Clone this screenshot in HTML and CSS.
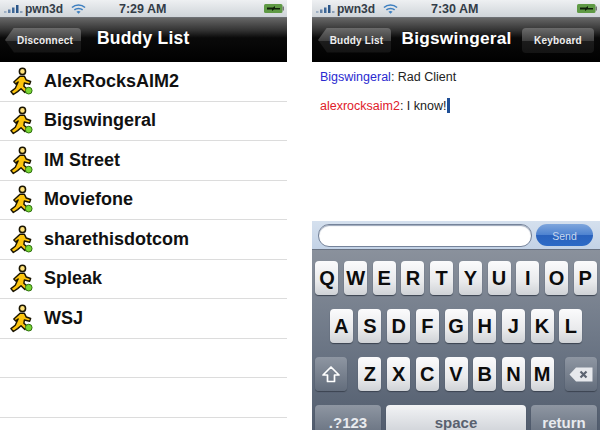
FILE: index.html
```html
<html>
<head>
   <link rel="stylesheet" href="styles.css">
</head>
<body>
   <svg class="defs" width="0" height="0">
      <symbol id="aim" viewBox="0 0 26 30">
         <circle cx="14" cy="4.5" r="3.2" fill="#ffe27a" stroke="#1a1400" stroke-width="1.6"/>
         <path d="M11.5 9.5 L16 9.5 L18 13.5 L22.5 15 L21.5 17.8 L16 16.5 L15.5 20 L20 24 L16.5 26.5 L12.5 22.5 L9 25.5 L4.5 28.5 L2 25.5 L6.5 22 L9.5 15.5 L7 17.5 L5 15.5 Z" fill="#fcc40e" stroke="#1a1400" stroke-width="1.5" stroke-linejoin="round"/>
         <circle cx="20.5" cy="24.5" r="3.5" fill="#7ad633" stroke="#2c6a10" stroke-width="1"/>
      </symbol>
      <symbol id="bars" viewBox="0 0 20 10">
         <rect x="0" y="7" width="2.5" height="2" fill="#9fb0c4"/>
         <rect x="4" y="5.5" width="2.5" height="3.5" fill="#5f7fa6"/>
         <rect x="8" y="3.5" width="2.5" height="5.5" fill="#3d6797"/>
         <rect x="12" y="1" width="2.5" height="8" fill="#2a5689"/>
         <rect x="16" y="7" width="2.5" height="2" fill="#8ba0b8"/>
      </symbol>
      <symbol id="wifi" viewBox="0 0 16 12">
         <g fill="none" stroke="#3d7fc0" stroke-width="1.7">
            <path d="M1 4.4 C5 .8 11 .8 15 4.4"/>
            <path d="M3.6 7 C6 5 10 5 12.4 7"/>
         </g>
         <path d="M8 11 L5.8 8.8 C7 7.9 9 7.9 10.2 8.8 Z" fill="#3d7fc0"/>
      </symbol>
      <symbol id="battery" viewBox="0 0 20 9">
         <rect x="0" y="0" width="18.5" height="9" rx="1.5" fill="#5f9a45"/>
         <rect x="18.5" y="2.5" width="1.5" height="4" fill="#777"/>
         <path d="M3 3.5 H9 L11 2 V4 H16 V5.5 H10 L8 7 V5.5 H3 Z" fill="#10200a"/>
      </symbol>
   </svg>

   <div class="phone phone-left">
      <div class="status-bar">
         <svg class="bars"><use href="#bars"/></svg>
         <span class="carrier">pwn3d</span>
         <svg class="wifi"><use href="#wifi"/></svg>
         <span class="clock">7:29 AM</span>
         <svg class="battery"><use href="#battery"/></svg>
      </div>
      <div class="nav-bar">
         <div class="btn btn-back">Disconnect</div>
         <div class="nav-title">Buddy List</div>
      </div>
      <div class="buddy-list">
         <div class="buddy"><svg class="aim"><use href="#aim"/></svg>AlexRocksAIM2</div>
         <div class="buddy"><svg class="aim"><use href="#aim"/></svg>Bigswingeral</div>
         <div class="buddy"><svg class="aim"><use href="#aim"/></svg>IM Street</div>
         <div class="buddy"><svg class="aim"><use href="#aim"/></svg>Moviefone</div>
         <div class="buddy"><svg class="aim"><use href="#aim"/></svg>sharethisdotcom</div>
         <div class="buddy"><svg class="aim"><use href="#aim"/></svg>Spleak</div>
         <div class="buddy"><svg class="aim"><use href="#aim"/></svg>WSJ</div>
         <div class="buddy"></div>
         <div class="buddy"></div>
      </div>
   </div>

   <div class="phone phone-right">
      <div class="status-bar">
         <svg class="bars"><use href="#bars"/></svg>
         <span class="carrier">pwn3d</span>
         <svg class="wifi"><use href="#wifi"/></svg>
         <span class="clock">7:30 AM</span>
         <svg class="battery"><use href="#battery"/></svg>
      </div>
      <div class="nav-bar nav-chat">
         <div class="btn btn-back btn-buddy">Buddy List</div>
         <div class="nav-title">Bigswingeral</div>
         <div class="btn btn-keyboard">Keyboard</div>
      </div>
      <div class="chat">
         <p><span class="them">Bigswingeral</span>: Rad Client</p>
         <p><span class="me">alexrocksaim2</span>: I know!<span class="caret"></span></p>
      </div>
      <div class="input-bar">
         <div class="input-box"></div>
         <div class="send">Send</div>
      </div>
      <div class="keyboard">
         <div class="key-row">
            <div class="key">Q</div><div class="key">W</div><div class="key">E</div><div class="key">R</div><div class="key">T</div>
            <div class="key">Y</div><div class="key">U</div><div class="key">I</div><div class="key">O</div><div class="key">P</div>
         </div>
         <div class="key-row">
            <div class="key">A</div><div class="key">S</div><div class="key">D</div><div class="key">F</div><div class="key">G</div>
            <div class="key">H</div><div class="key">J</div><div class="key">K</div><div class="key">L</div>
         </div>
         <div class="key-row row-three">
            <div class="key key-dark key-side">
               <svg width="18" height="17" viewBox="0 0 18 17"><path d="M9 1 L17 9 H12.5 V15.5 H5.5 V9 H1 Z" fill="none" stroke="#fff" stroke-width="1.7" stroke-linejoin="round"/></svg>
            </div>
            <div class="letters">
               <div class="key">Z</div><div class="key">X</div><div class="key">C</div><div class="key">V</div>
               <div class="key">B</div><div class="key">N</div><div class="key">M</div>
            </div>
            <div class="key key-dark key-side">
               <svg width="24" height="15" viewBox="0 0 24 15"><path d="M7 0.5 H23.5 V14.5 H7 L0.5 7.5 Z" fill="#e6e8ec"/><path d="M11.5 4.5 L17.5 10.5 M17.5 4.5 L11.5 10.5" stroke="#5c6472" stroke-width="2.2"/></svg>
            </div>
         </div>
         <div class="key-row row-four">
            <div class="key key-dark key-num">.?123</div>
            <div class="key key-space">space</div>
            <div class="key key-dark key-return">return</div>
         </div>
      </div>
   </div>
</body>
</html>
```

FILE: styles.css
```css
html, body {
   margin: 0;
   padding: 0;
   background-color: #fff;
}
body {
   display: flex;
   width: 600px;
   height: 430px;
   overflow: hidden;
   font-family: "Liberation Sans", Arial, sans-serif;
}
.defs {
   position: absolute;
}
.phone {
   display: flex;
   flex-direction: column;
   height: 430px;
   overflow: hidden;
}
.phone-left {
   width: 287px;
   margin-right: 25px;
}
.phone-right {
   width: 288px;
}

/* status bar */
.status-bar {
   display: flex;
   flex: none;
   align-items: center;
   height: 18px;
   padding-left: 4px;
   background: linear-gradient(#eef0f2, #cfd4d9);
   color: #333c47;
   font-size: 11px;
   font-weight: bold;
   box-sizing: border-box;
   border-bottom: 1px solid #6d7074;
}
.bars {
   width: 20px;
   height: 10px;
}
.carrier {
   margin-left: 1px;
   width: 46px;
   font-size: 12px;
}
.wifi {
   width: 15px;
   height: 12px;
}
.clock {
   margin-left: 33px;
   font-size: 12.5px;
   flex: 1;
}
.battery {
   width: 20px;
   height: 9px;
   margin-right: 3px;
}

/* nav bar */
.nav-bar {
   display: flex;
   flex: none;
   align-items: center;
   height: 44px;
   padding-left: 5px;
   background: linear-gradient(#666 0, #333 28%, #0a0a0a 45%, #000 100%);
   color: #fff;
   box-sizing: border-box;
}
.nav-title {
   margin-left: 16px;
   margin-top: -4px;
   font-size: 17.5px;
   font-weight: bold;
   letter-spacing: .2px;
   text-shadow: 0 -1px 0 #222;
}
.btn {
   display: flex;
   align-items: center;
   justify-content: center;
   height: 25px;
   background: linear-gradient(#6b6b6b, #3f3f3f 50%, #1c1c1c 52%, #141414);
   border-radius: 4px;
   font-size: 10px;
   font-weight: bold;
   letter-spacing: .2px;
   color: #eee;
}
.btn-back {
   width: 72px;
   padding-left: 4px;
   clip-path: polygon(9px 0, 100% 0, 100% 100%, 9px 100%, 0 50%);
}
.nav-chat {
   padding-left: 6px;
   padding-right: 6px;
   justify-content: space-between;
}
.nav-chat .nav-title {
   margin-left: 0;
   font-size: 17.3px;
}
.nav-chat .btn-buddy {
   width: 69px;
}
.btn-keyboard {
   width: 72px;
   font-size: 10px;
}

/* buddy list */
.buddy-list {
   flex: 1;
}
.buddy {
   display: flex;
   align-items: center;
   height: 39.5px;
   box-sizing: border-box;
   border-bottom: 1px solid #dcdcdc;
   color: #111;
   font-size: 18px;
   font-weight: bold;
}
.aim {
   width: 25px;
   height: 29px;
   margin-left: 9px;
   margin-right: 10px;
}

/* chat */
.chat {
   flex: none;
   height: 159px;
   padding: 8px 0 0 8px;
   box-sizing: border-box;
   font-size: 12.5px;
   color: #222;
}
.chat p {
   margin: 0 0 13px 0;
   line-height: 15px;
}
.them {
   color: #2a2ad0;
}
.me {
   color: #e0202a;
}
.caret {
   display: inline-block;
   width: 3px;
   height: 15px;
   margin-left: 1px;
   vertical-align: -3px;
   background-color: #1f4f96;
}

/* text input */
.input-bar {
   display: flex;
   flex: none;
   align-items: center;
   height: 29px;
   padding: 0 7px 0 6px;
   gap: 4px;
   box-sizing: border-box;
   background: linear-gradient(#d5e0ee, #c3d2e6);
   border-bottom: 1px solid #6a7382;
}
.input-box {
   flex: 1;
   height: 21px;
   background-color: #fff;
   border: 1px solid #75839a;
   border-radius: 11px;
   box-shadow: inset 0 1px 1px #9aa6b8;
}
.send {
   width: 57px;
   height: 22px;
   line-height: 24px;
   text-align: center;
   background: linear-gradient(#7fa6dc, #4d82d0 50%, #2a62bd 52%, #2c6ac6);
   border-radius: 11px;
   color: #c8d8ee;
   font-size: 10.5px;
   font-weight: normal;
}

/* keyboard */
.keyboard {
   flex: 1;
   display: flex;
   flex-direction: column;
   gap: 14px;
   padding: 11px 3px 0 3px;
   background: linear-gradient(#8a919c, #6f7988 45%, #4f5a6b);
}
.key-row {
   display: flex;
   flex: none;
   justify-content: center;
   gap: 5.7px;
   height: 34px;
}
.key {
   display: flex;
   flex: none;
   align-items: center;
   justify-content: center;
   width: 23px;
   height: 34px;
   box-sizing: border-box;
   background: linear-gradient(#fbfbfc, #e9eaec 60%, #cfd2d6);
   border-radius: 4px;
   box-shadow: 0 1px 1px #3b4350;
   color: #0c0c0c;
   font-size: 20px;
   font-weight: bold;
}
.letters {
   display: flex;
   gap: 5.7px;
}
.row-three {
   justify-content: space-between;
}
.key-dark {
   background: linear-gradient(#8e96a2, #636d7c);
   color: #e8eaee;
}
.key-side {
   width: 32px;
}
.row-four {
   justify-content: space-between;
   gap: 5px;
}
.key-num {
   width: 66px;
   font-size: 15px;
}
.key-space {
   flex: 1;
   background: linear-gradient(#f2f3f5, #c8ccd2);
   color: #59616f;
   font-size: 15px;
}
.key-return {
   width: 66px;
   font-size: 15px;
}
```
